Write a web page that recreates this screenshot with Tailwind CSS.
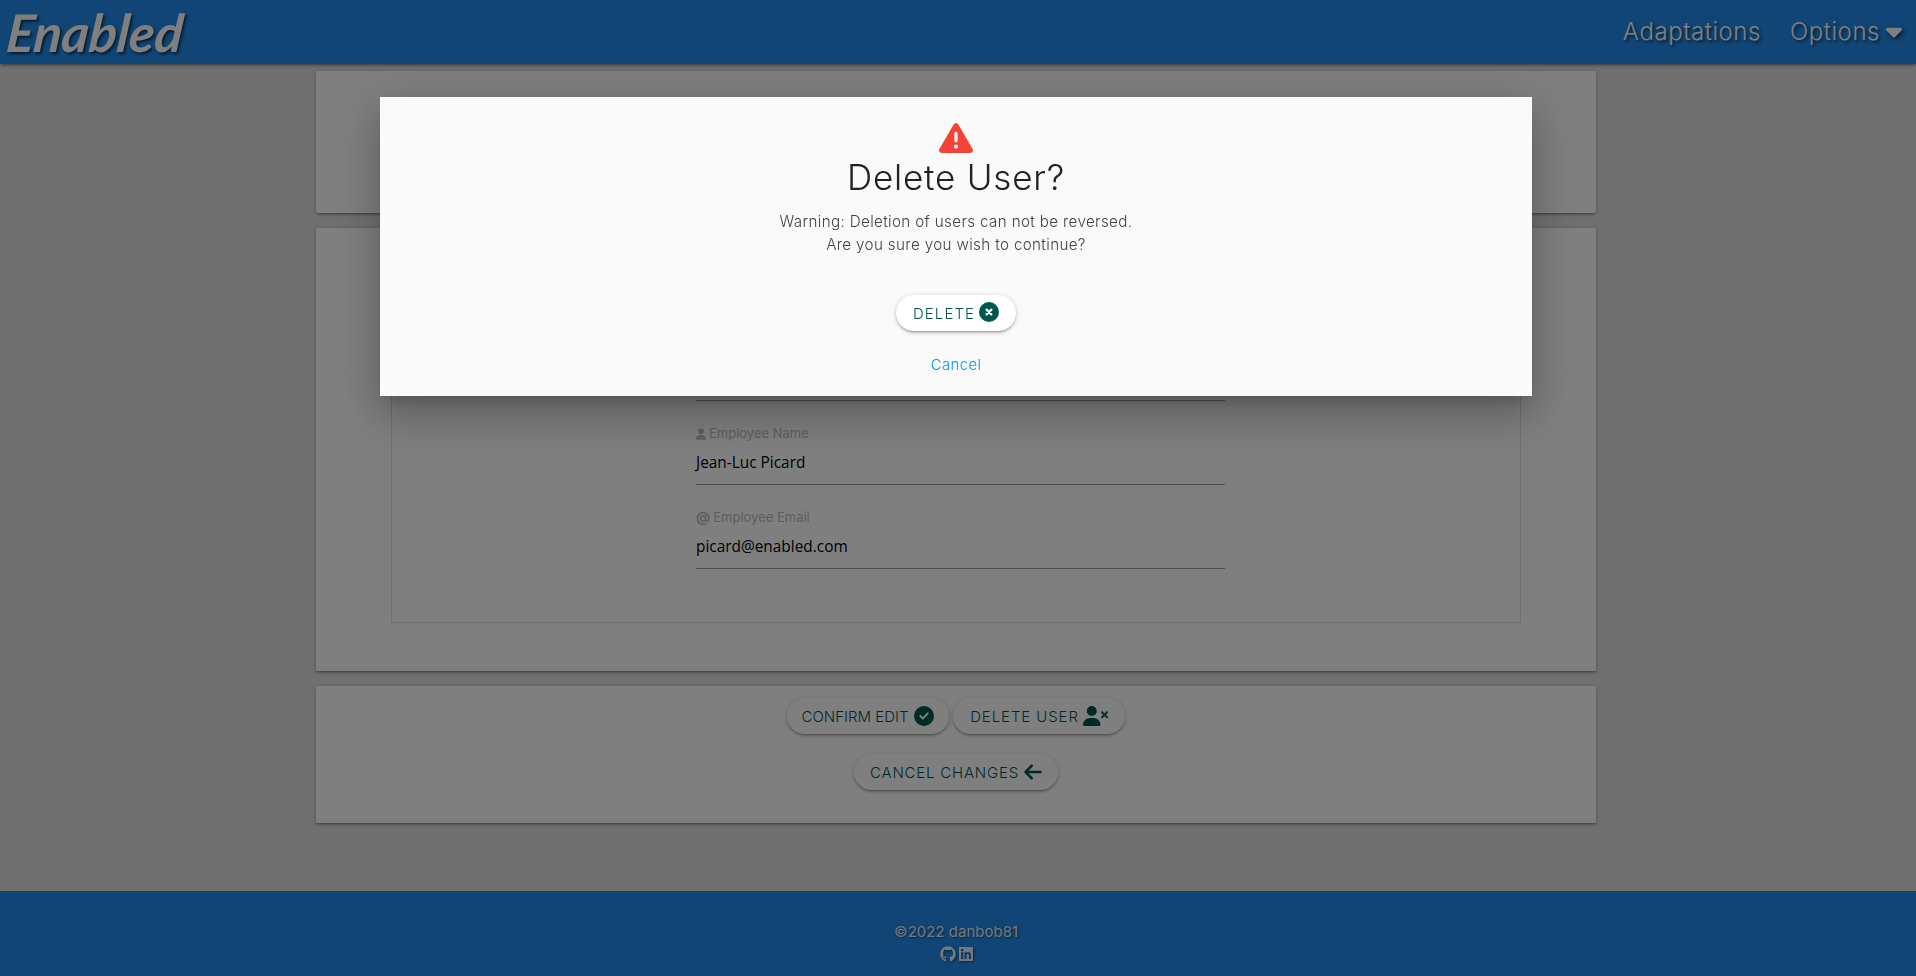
<!DOCTYPE html>
<html lang="en">
<head>
    <meta charset="UTF-8">
    <title>Enabled - Edit User</title>
    <script src="https://cdn.jsdelivr.net/npm/@tailwindcss/browser@4"></script>
</head>
<body class="bg-[#e0e0e0] font-['Inter',sans-serif] overflow-hidden">
    <div class="flex flex-col h-[976px]">
        <!-- Navigation -->
        <nav class="h-[64px] shrink-0 bg-[#208aea] flex items-center justify-between shadow-[0_2px_2px_rgba(0,0,0,0.14),0_3px_1px_-2px_rgba(0,0,0,0.12),0_1px_5px_rgba(0,0,0,0.2)] text-white [text-shadow:2px_2px_3px_rgba(0,0,0,0.6)]">
            <div class="pl-[7px] font-['Lato',sans-serif] italic font-bold text-[52px] leading-[60px] -skew-x-6">Enabled</div>
            <div class="flex items-center pr-[14px] text-[24px] font-light">
                <span class="tracking-[0.55px]">Adaptations</span>
                <span class="ml-[29px] tracking-[0.55px]">Options</span>
                <svg class="w-[16px] h-[26px] ml-[6px] -mt-[3px] drop-shadow-[2px_2px_2px_rgba(0,0,0,0.6)]" viewBox="0 0 320 512" fill="currentColor"><path d="M137.4 374.6c12.5 12.5 32.8 12.5 45.3 0l128-128c9.2-9.2 11.9-22.9 6.9-34.9s-16.6-19.8-29.6-19.8L32 192c-12.9 0-24.6 7.8-29.6 19.8s-2.2 25.7 6.9 34.9l128 128z"/></svg>
            </div>
        </nav>

        <!-- Main Content -->
        <main class="flex-1 pt-[7px] pl-[316px]">
            <div class="w-[1280px] flex flex-col gap-[15px]">
                <div class="h-[142px] bg-white rounded-[2px] shadow-[0_2px_2px_rgba(0,0,0,0.14),0_3px_1px_-2px_rgba(0,0,0,0.12),0_1px_5px_rgba(0,0,0,0.2)]"></div>

                <div class="h-[443px] bg-white rounded-[2px] shadow-[0_2px_2px_rgba(0,0,0,0.14),0_3px_1px_-2px_rgba(0,0,0,0.12),0_1px_5px_rgba(0,0,0,0.2)] px-[75px] pt-[20px]">
                    <div class="h-[375px] border border-[#e0e0e0] flex flex-col items-center justify-end pb-[53px]">
                        <div class="w-[529px] ml-[9px]">
                            <div class="border-b border-[#9e9e9e] h-[1px] mb-[25px]"></div>
                            <div class="flex items-center gap-[3px] text-[13px] text-[#bdbdbd] h-[16px] mb-[8px]">
                                <svg class="w-[10px] h-[12px]" viewBox="0 0 448 512" fill="currentColor"><path d="M224 256A128 128 0 1 0 224 0a128 128 0 1 0 0 256zm-45.7 48C79.8 304 0 383.8 0 482.3C0 498.7 13.3 512 29.7 512H418.3c16.4 0 29.7-13.3 29.7-29.7C448 383.8 368.2 304 269.7 304H178.3z"/></svg>
                                <span>Employee Name</span>
                            </div>
                            <div class="font-['Open_Sans',sans-serif] text-[15.4px] text-black leading-[24px] border-b border-[#9e9e9e] pt-[1px] pb-[9px] mb-[25px]">Jean-Luc Picard</div>
                            <div class="flex items-center gap-[3px] text-[13px] text-[#bdbdbd] h-[16px] mb-[8px]">
                                <span class="font-bold text-[14px] leading-none -mt-[3px]">@</span>
                                <span>Employee Email</span>
                            </div>
                            <div class="font-['Open_Sans',sans-serif] text-[15.4px] text-black leading-[24px] border-b border-[#9e9e9e] pt-[1px] pb-[9px]">picard@enabled.com</div>
                        </div>
                    </div>
                </div>

                <div class="h-[137px] bg-white rounded-[2px] shadow-[0_2px_2px_rgba(0,0,0,0.14),0_3px_1px_-2px_rgba(0,0,0,0.12),0_1px_5px_rgba(0,0,0,0.2)] pt-[12px] flex flex-col items-center gap-[20px] text-[#00574b] text-[15px]">
                    <div class="flex gap-[4px]">
                        <button class="h-[36px] w-[162px] pt-[2px] rounded-full bg-white shadow-[0_2px_2px_rgba(0,0,0,0.14),0_3px_1px_-2px_rgba(0,0,0,0.12),0_1px_5px_rgba(0,0,0,0.2)] flex items-center justify-center gap-[6px] font-light">
                            CONFIRM EDIT
                            <svg class="w-[20px] h-[20px] -mt-[3px]" viewBox="0 0 512 512" fill="currentColor"><path d="M256 512A256 256 0 1 0 256 0a256 256 0 1 0 0 512zM369 209L241 337c-9.4 9.4-24.6 9.4-33.9 0l-64-64c-9.4-9.4-9.4-24.6 0-33.9s24.6-9.4 33.9 0l47 47L335 175c9.4-9.4 24.6-9.4 33.9 0s9.4 24.6 0 33.9z"/></svg>
                        </button>
                        <button class="h-[36px] w-[172px] pt-[2px] rounded-full bg-white shadow-[0_2px_2px_rgba(0,0,0,0.14),0_3px_1px_-2px_rgba(0,0,0,0.12),0_1px_5px_rgba(0,0,0,0.2)] flex items-center justify-center gap-[4px] font-light tracking-[0.9px]">
                            DELETE USER
                            <svg class="w-[25px] h-[20px] -mt-[3px]" viewBox="0 0 640 512" fill="currentColor"><path d="M224 256A128 128 0 1 0 224 0a128 128 0 1 0 0 256zm-45.7 48C79.8 304 0 383.8 0 482.3C0 498.7 13.3 512 29.7 512H418.3c16.4 0 29.7-13.3 29.7-29.7C448 383.8 368.2 304 269.7 304H178.3zM471 143c9.4-9.4 24.6-9.4 33.9 0l47 47 47-47c9.4-9.4 24.6-9.4 33.9 0s9.4 24.6 0 33.9l-47 47 47 47c9.4 9.4 9.4 24.6 0 33.9s-24.6 9.4-33.9 0l-47-47-47 47c-9.4 9.4-24.6 9.4-33.9 0s-9.4-24.6 0-33.9l47-47-47-47c-9.4-9.4-9.4-24.6 0-33.9z"/></svg>
                        </button>
                    </div>
                    <button class="h-[36px] w-[204px] pt-[2px] rounded-full bg-white shadow-[0_2px_2px_rgba(0,0,0,0.14),0_3px_1px_-2px_rgba(0,0,0,0.12),0_1px_5px_rgba(0,0,0,0.2)] flex items-center justify-center gap-[5px] font-light tracking-[0.8px]">
                        CANCEL CHANGES
                        <svg class="w-[18px] h-[20px] -mt-[3px]" viewBox="0 0 448 512" fill="currentColor"><path d="M9.4 233.4c-12.5 12.5-12.5 32.8 0 45.3l160 160c12.5 12.5 32.8 12.5 45.3 0s12.5-32.8 0-45.3L109.2 288 416 288c17.7 0 32-14.3 32-32s-14.3-32-32-32l-306.7 0L214.6 118.6c12.5-12.5 12.5-32.8 0-45.3s-32.8-12.5-45.3 0l-160 160z"/></svg>
                    </button>
                </div>
            </div>
        </main>

        <!-- Footer -->
        <footer class="h-[85px] shrink-0 bg-[#208aea] flex flex-col items-center pt-[32px] pr-[4px] text-white/90 text-[15px] [text-shadow:1px_1px_2px_rgba(0,0,0,0.5)]">
            <div class="leading-[18px]">©2022 danbob81</div>
            <div class="flex items-center gap-[3px] mt-[5px]">
                <svg class="w-[16px] h-[16px] drop-shadow-[1px_1px_1px_rgba(0,0,0,0.5)]" viewBox="0 0 496 512" fill="currentColor"><path d="M165.9 397.4c0 2-2.3 3.6-5.2 3.6-3.3 0-5.6-1.6-5.6-3.6 0-2 2.3-3.6 5.2-3.6 3-.3 5.6 1.3 5.6 3.6zm-31.1-4.5c-.7 2 1.3 4.3 4.3 4.9 2.6 1 5.6 0 6.2-2s-1.3-4.3-4.3-5.2c-2.6-.7-5.5.3-6.2 2.3zm44.2-1.7c-2.9.7-4.9 2.6-4.6 4.9.3 2 2.9 3.3 5.9 2.6 2.9-.7 4.9-2.6 4.6-4.6-.3-1.9-3-3.2-5.9-2.9zM244.8 8C106.1 8 0 113.3 0 252c0 110.9 69.8 205.8 169.5 239.2 12.8 2.3 17.3-5.6 17.3-12.1 0-6.2-.3-40.4-.3-61.4 0 0-70 15-84.7-29.8 0 0-11.4-29.1-27.8-36.6 0 0-22.9-15.7 1.6-15.4 0 0 24.9 2 38.6 25.8 21.9 38.6 58.6 27.5 72.9 20.9 2.3-16 8.8-27.1 16-33.7-55.9-6.2-112.3-14.3-112.3-110.5 0-27.5 7.6-41.3 23.6-58.9-2.6-6.5-11.1-33.3 2.6-67.9 20.9-6.5 69 27 69 27 20-5.6 41.5-8.5 62.8-8.5s42.8 2.9 62.8 8.5c0 0 48.1-33.6 69-27 13.7 34.7 5.2 61.4 2.6 67.9 16 17.7 25.8 31.5 25.8 58.9 0 96.5-58.9 104.2-114.8 110.5 9.2 7.9 17 22.9 17 46.4 0 33.7-.3 75.4-.3 83.6 0 6.5 4.6 14.4 17.3 12.1C428.2 457.8 496 362.9 496 252 496 113.3 383.5 8 244.8 8z"/></svg>
                <svg class="w-[14px] h-[16px] drop-shadow-[1px_1px_1px_rgba(0,0,0,0.5)]" viewBox="0 0 448 512" fill="currentColor"><path d="M416 32H31.9C14.3 32 0 46.5 0 64.3v383.4C0 465.5 14.3 480 31.9 480H416c17.6 0 32-14.5 32-32.3V64.3c0-17.8-14.4-32.3-32-32.3zM135.4 416H69V202.2h66.5V416zm-33.2-243c-21.3 0-38.5-17.3-38.5-38.5S80.9 96 102.2 96c21.2 0 38.5 17.3 38.5 38.5 0 21.3-17.2 38.5-38.5 38.5zm282.1 243h-66.4V312c0-24.8-.5-56.7-34.5-56.7-34.6 0-39.9 27-39.9 54.9V416h-66.4V202.2h63.7v29.2h.9c8.9-16.8 30.6-34.5 62.9-34.5 67.2 0 79.7 44.3 79.7 101.9V416z"/></svg>
            </div>
        </footer>
    </div>

    <!-- Delete Modal -->
    <div class="fixed inset-0 bg-black/50">
        <div class="absolute left-[380px] top-[97px] w-[1152px] h-[299px] bg-[#fafafa] flex flex-col items-center pt-[24px] text-[#212121] shadow-[0_24px_38px_3px_rgba(0,0,0,0.14),0_9px_46px_8px_rgba(0,0,0,0.12),0_11px_15px_-7px_rgba(0,0,0,0.2)]">
            <svg class="w-[34px] h-[34px]" viewBox="0 0 512 512" fill="#f44336"><path d="M256 32c14.2 0 27.3 7.5 34.5 19.8l216 368c7.3 12.4 7.3 27.7 .2 40.1S486.3 480 472 480H40c-14.3 0-27.6-7.7-34.7-20.1s-7-27.8 .2-40.1l216-368C228.7 39.5 241.8 32 256 32zm0 128c-13.3 0-24 10.7-24 24V296c0 13.3 10.7 24 24 24s24-10.7 24-24V184c0-13.3-10.7-24-24-24zm32 224a32 32 0 1 0 -64 0 32 32 0 1 0 64 0z"/></svg>
            <h1 class="text-[35px] font-light leading-[48px] tracking-[0.8px] -mt-[2px]">Delete User?</h1>
            <p class="mt-[9px] text-[15.2px] leading-[23px] font-light text-center text-[#424242] tracking-[0.35px]">Warning: Deletion of users can not be reversed.<br>Are you sure you wish to continue?</p>
            <button class="mt-[39px] h-[36px] w-[120px] pt-[2px] rounded-full bg-white text-[#00574b] text-[15px] font-light tracking-[1.1px] flex items-center justify-center gap-[4px] shadow-[0_2px_2px_rgba(0,0,0,0.14),0_3px_1px_-2px_rgba(0,0,0,0.12),0_1px_5px_rgba(0,0,0,0.2)]">
                DELETE
                <svg class="w-[20px] h-[20px] -mt-[4px]" viewBox="0 0 512 512"><circle cx="256" cy="256" r="256" fill="currentColor"/><path d="M195 195L317 317M317 195L195 317" stroke="#ffffff" stroke-width="58" stroke-linecap="round"/></svg>
            </button>
            <a class="mt-[23px] text-[15px] font-light leading-[22px] text-[#039be5] tracking-[0.3px]">Cancel</a>
        </div>
    </div>
</body>
</html>
